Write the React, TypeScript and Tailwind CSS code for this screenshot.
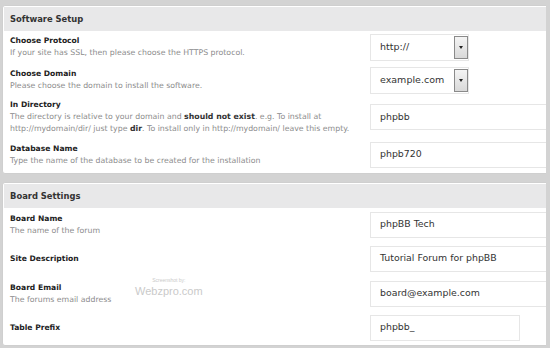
import { ReactNode } from "react";

const font = { fontFamily: '"DejaVu Sans", Verdana, sans-serif' };

function SelectBox({ value, width }: { value: string; width: string }) {
  return (
    <div className={`flex h-[27px] items-center border border-[#e6e6e6] bg-white ${width}`}>
      <span className="flex-1 pl-[9px] text-[9.5px] text-[#333]">{value}</span>
      <span className="flex h-[23px] w-[14px] items-center justify-center border border-[#8a8a8a] bg-gradient-to-b from-[#f4f4f4] to-[#d9d9d9]">
        <span className="h-0 w-0 border-x-[2.5px] border-t-[3px] border-x-transparent border-t-[#222]" />
      </span>
    </div>
  );
}

function TextBox({ value, width = "w-[200px]" }: { value: string; width?: string }) {
  return (
    <div className={`flex h-[26px] items-center border border-[#e6e6e6] bg-white pl-[9px] text-[9.4px] text-[#333] ${width}`}>
      {value}
    </div>
  );
}

function Row({
  label,
  desc,
  height,
  children,
}: {
  label: string;
  desc?: ReactNode;
  height: string;
  children: ReactNode;
}) {
  return (
    <div className={`flex items-center ${height}`}>
      <div className="w-[366px] pl-[6px] leading-[12px]">
        <div className="text-[7.6px] font-bold text-[#222]">{label}</div>
        {desc && <div className="text-[7.8px] text-[#8c8c8c]">{desc}</div>}
      </div>
      <div className="flex-1">{children}</div>
    </div>
  );
}

function Panel({ title, children }: { title: string; children: ReactNode }) {
  return (
    <div className="rounded-[3px] border border-[#cfcfcf] bg-white p-[1px]">
      <div className="flex h-[24px] items-center bg-[#e8e8e9] pl-[6px] text-[8.4px] font-bold text-[#333]">
        {title}
      </div>
      {children}
    </div>
  );
}

export default function App() {
  return (
    <div style={font} className="relative flex h-[348px] w-[550px] overflow-hidden bg-[#d3d3d3]">
      <div className="w-[546px] overflow-hidden pl-[2px] pt-[5px]">
        <div className="flex w-[600px] flex-col gap-[8px]">
          <Panel title="Software Setup">
            <Row
              label="Choose Protocol"
              desc="If your site has SSL, then please choose the HTTPS protocol."
              height="h-[32px]"
            >
              <SelectBox value="http://" width="w-[99px]" />
            </Row>
            <Row
              label="Choose Domain"
              desc="Please choose the domain to install the software."
              height="h-[34px]"
            >
              <SelectBox value="example.com" width="w-[99px]" />
            </Row>
            <Row
              label="In Directory"
              desc={
                <>
                  The directory is relative to your domain and{" "}
                  <b className="text-[#333]">should not exist</b>. e.g. To install at
                  <br />
                  http://mydomain/dir/ just type <b className="text-[#333]">dir</b>. To install
                  only in http://mydomain/ leave this empty.
                </>
              }
              height="h-[40px]"
            >
              <TextBox value="phpbb" />
            </Row>
            <Row
              label="Database Name"
              desc="Type the name of the database to be created for the installation"
              height="h-[35px]"
            >
              <TextBox value="phpb720" />
            </Row>
          </Panel>
          <Panel title="Board Settings">
            <Row label="Board Name" desc="The name of the forum" height="h-[33px]">
              <TextBox value="phpBB Tech" />
            </Row>
            <Row label="Site Description" height="h-[35px]">
              <TextBox value="Tutorial Forum for phpBB" />
            </Row>
            <Row label="Board Email" desc="The forums email address" height="h-[35px]">
              <TextBox value="board@example.com" />
            </Row>
            <Row label="Table Prefix" height="h-[33px]">
              <TextBox value="phpbb_" width="w-[150px]" />
            </Row>
          </Panel>
        </div>
      </div>
      <div className="absolute left-[135px] top-[278px] flex flex-col items-center leading-none text-[#cacaca]">
        <span className="text-[5px]" style={{ fontFamily: '"Liberation Sans Narrow", "Liberation Sans", sans-serif' }}>
          Screenshot by:
        </span>
        <span className="mt-[3px] text-[11px]" style={{ fontFamily: '"Liberation Sans Narrow", "Liberation Sans", sans-serif' }}>
          Webzpro.com
        </span>
      </div>
    </div>
  );
}
